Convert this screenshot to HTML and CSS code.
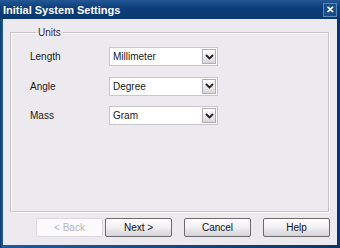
FILE: index.html
```html
<!DOCTYPE html>
<html lang="en">
<head>
    <meta charset="UTF-8">
    <title>Initial System Settings</title>
    <link rel="stylesheet" href="styles.css">
</head>
<body>
    <div class="window">
        <div class="titlebar">
            <span class="title">Initial System Settings</span>
            <span class="close">&#x2715;</span>
        </div>
        <div class="client">
            <fieldset class="group">
                <legend>Units</legend>
                <div class="row">
                    <span class="label">Length</span>
                    <div class="combo"><span>Millimeter</span><span class="drop"><svg width="9" height="6" viewBox="0 0 9 6"><path d="M1 1 L4.5 4.5 L8 1" fill="none" stroke="#222" stroke-width="1.8"/></svg></span></div>
                </div>
                <div class="row">
                    <span class="label">Angle</span>
                    <div class="combo"><span>Degree</span><span class="drop"><svg width="9" height="6" viewBox="0 0 9 6"><path d="M1 1 L4.5 4.5 L8 1" fill="none" stroke="#222" stroke-width="1.8"/></svg></span></div>
                </div>
                <div class="row">
                    <span class="label">Mass</span>
                    <div class="combo"><span>Gram</span><span class="drop"><svg width="9" height="6" viewBox="0 0 9 6"><path d="M1 1 L4.5 4.5 L8 1" fill="none" stroke="#222" stroke-width="1.8"/></svg></span></div>
                </div>
            </fieldset>
            <div class="buttons">
                <button class="btn disabled">&lt; Back</button>
                <button class="btn">Next &gt;</button>
                <button class="btn gap">Cancel</button>
                <button class="btn gap">Help</button>
            </div>
        </div>
    </div>
</body>
</html>
```

FILE: styles.css
```css
body {
    margin: 0;
    font-family: "Liberation Sans", Arial, sans-serif;
    font-size: 10px;
}
.window {
    width: 340px;
    height: 248px;
    box-sizing: border-box;
    background: linear-gradient(to right, #0a356a, #1d5a9c 2px, #0a356a);
    padding: 0 3px 3px 3px;
    display: flex;
    flex-direction: column;
}
.titlebar {
    height: 19px;
    display: flex;
    align-items: center;
    justify-content: space-between;
    background: linear-gradient(to bottom, #235894, #0d3e7b 40%, #0a376f);
    margin: 0 -3px;
    padding: 0 3px 0 3px;
}
.title {
    color: #ffffff;
    font-weight: bold;
    font-size: 11px;
}
.close {
    width: 12px;
    height: 12px;
    background: #1a4d8a;
    border: 1px solid #5a86b8;
    color: #ffffff;
    font-size: 10px;
    font-weight: bold;
    display: flex;
    align-items: center;
    justify-content: center;
}
.client {
    flex: 1;
    background-color: #ECEAEF;
    display: flex;
    flex-direction: column;
}
.group {
    margin: 8px 8px 0 7px;
    height: 185px;
    box-sizing: border-box;
    border: 1px solid #c5c3c9;
    box-shadow: inset 1px 1px 0 #ffffff, 1px 1px 0 #ffffff;
    padding: 9px 0 0 19px;
}
.group legend {
    color: #3d1f46;
    padding: 0 2px;
    margin-left: 6px;
    font-size: 10px;
}
.row {
    display: flex;
    align-items: center;
    height: 19px;
    margin-bottom: 10.5px;
}
.label {
    width: 79px;
    color: #1a1a1a;
}
.combo {
    width: 109px;
    height: 19px;
    box-sizing: border-box;
    background: #ffffff;
    border: 1px solid #c9c7cd;
    display: flex;
    align-items: center;
    justify-content: space-between;
    padding: 1px 1px 1px 3px;
    color: #1a1a1a;
}
.drop {
    width: 14px;
    height: 15px;
    box-sizing: border-box;
    border: 1px solid #b0aeb4;
    background: linear-gradient(to bottom, #ffffff, #d8d6dc);
    display: flex;
    align-items: center;
    justify-content: center;
}
.buttons {
    display: flex;
    padding: 6px 0 0 33px;
}
.btn {
    width: 67px;
    height: 19px;
    margin-right: 2px;
    font-family: "Liberation Sans", Arial, sans-serif;
    font-size: 10px;
    color: #111;
    border: 1px solid #6b6b6b;
    border-radius: 2px;
    background: linear-gradient(to bottom, #ffffff, #f0eff2 50%, #d4d2d8);
    padding: 0;
}
.btn.gap {
    margin-left: 10px;
}
.btn.disabled {
    color: #b8b6bc;
    background: #fbfbfc;
    border-color: #dad8de;
}
```
